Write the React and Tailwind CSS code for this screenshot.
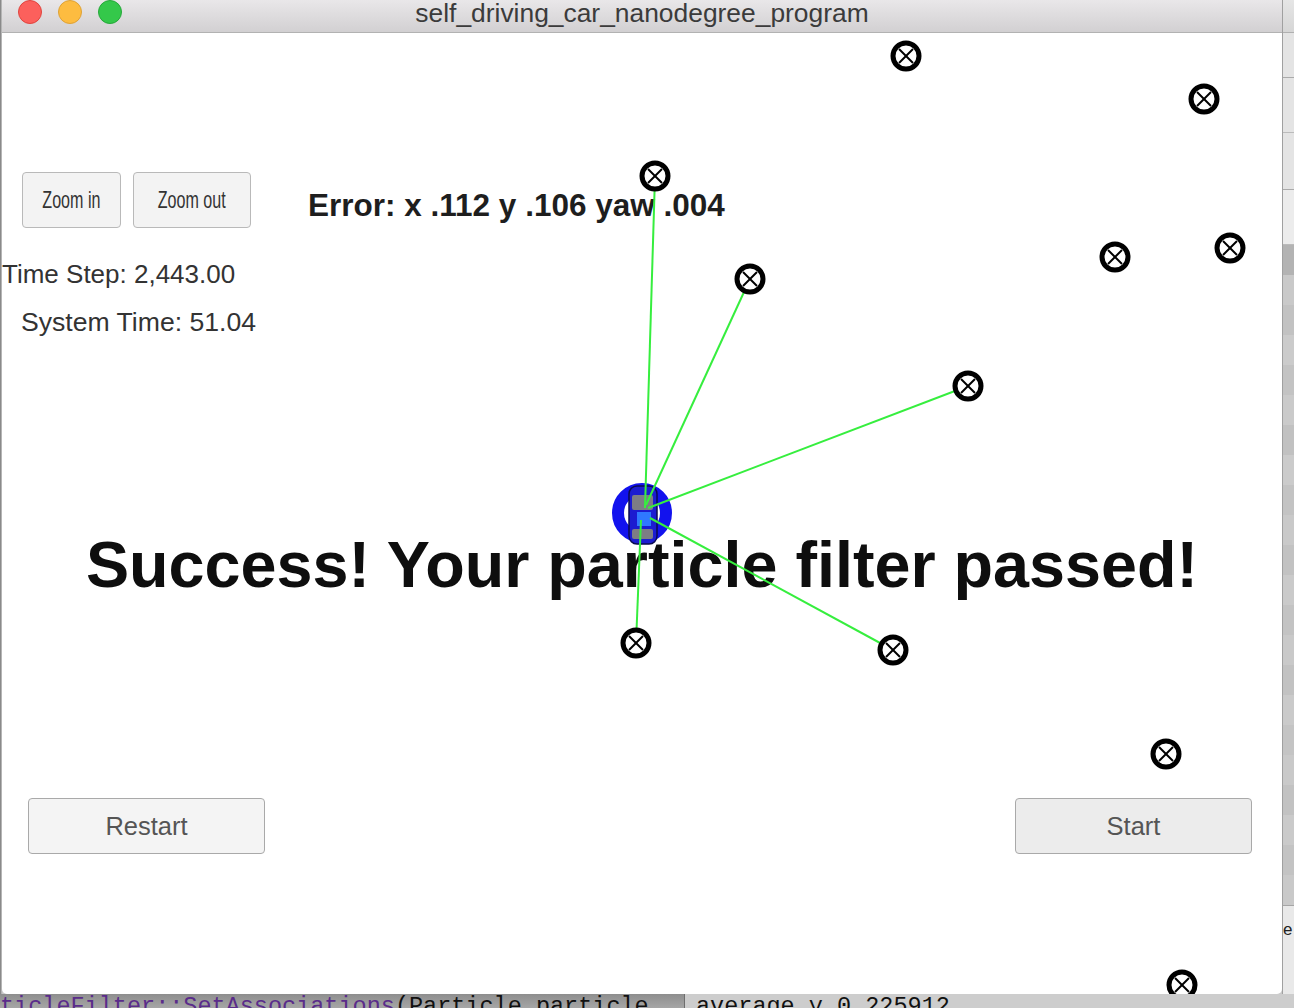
import React from 'react';

const markers = [
  [906, 56],
  [1204, 99],
  [655, 176],
  [750, 279],
  [1115, 257],
  [1230, 248],
  [968, 386],
  [636, 643],
  [893, 650],
  [1166, 754],
  [1182, 985],
];

const links = [
  [645, 508, 655, 176],
  [646, 505, 750, 279],
  [648, 508, 968, 386],
  [641, 520, 636, 643],
  [650, 518, 893, 650],
];

const sideStripes = [
  'bg-[#c9c9c9]', 'bg-[#c2c2c2]', 'bg-[#cbcbcb]', 'bg-[#c3c3c3]', 'bg-[#cacaca]',
  'bg-[#c1c1c1]', 'bg-[#cbcbcb]', 'bg-[#c3c3c3]', 'bg-[#c9c9c9]', 'bg-[#c2c2c2]',
  'bg-[#cacaca]', 'bg-[#c3c3c3]', 'bg-[#c9c9c9]', 'bg-[#c2c2c2]', 'bg-[#cacaca]',
  'bg-[#c4c4c4]', 'bg-[#c9c9c9]', 'bg-[#c2c2c2]', 'bg-[#cacaca]', 'bg-[#c3c3c3]',
  'bg-[#c9c9c9]',
];

function Landmark({ x, y }) {
  return (
    <g transform={`translate(${x} ${y})`}>
      <circle r="13" fill="white" stroke="black" strokeWidth="5" />
      <line x1="-7" y1="-7" x2="7" y2="7" stroke="black" strokeWidth="2" />
      <line x1="-7" y1="7" x2="7" y2="-7" stroke="black" strokeWidth="2" />
    </g>
  );
}

function Scene() {
  // drawn in page coordinates, viewBox offsets match the window content origin
  return (
    <svg
      className="absolute inset-0 pointer-events-none"
      width="1280"
      height="961"
      viewBox="2 33 1280 961"
    >
      <circle cx="642" cy="513" r="24" fill="none" stroke="#1212ee" strokeWidth="12" />
      <rect x="629" y="486" width="28" height="58" rx="8" fill="#1c1cd0" stroke="#0a0a50" strokeWidth="1.5" />
      <rect x="632" y="495" width="21" height="15" rx="2" fill="#7d7d85" />
      <rect x="632" y="529" width="21" height="10" rx="2" fill="#7d7d85" />
      <rect x="637" y="512" width="14" height="14" fill="#2f78ff" />
      {links.map(([x1, y1, x2, y2], i) => (
        <line key={i} x1={x1} y1={y1} x2={x2} y2={y2} stroke="#36ee3e" strokeWidth="2" />
      ))}
      {markers.map(([x, y], i) => (
        <Landmark key={i} x={x} y={y} />
      ))}
    </svg>
  );
}

function ZoomButton({ label, width }) {
  return (
    <button
      className={`${width} h-[56px] flex items-center justify-center bg-[#f3f3f3] border border-[#b9b9b9] rounded-[4px] text-[#333] text-[24px]`}
    >
      <span className="inline-block scale-x-[0.67]">{label}</span>
    </button>
  );
}

function SimButton({ label, tone }) {
  return (
    <button
      className={`w-[237px] h-[56px] flex items-center justify-center border border-[#a9a9a9] rounded-[4px] text-[#555] text-[25.5px] ${tone}`}
    >
      {label}
    </button>
  );
}

export default function App() {
  return (
    <div
      className="w-[1294px] h-[1008px] flex flex-col overflow-hidden bg-[#c8c8c8]"
      style={{ fontFamily: '"Liberation Sans", Arial, sans-serif' }}
    >
      <div className="flex h-[994px]">
        <div className="w-[2px] bg-[#b5b5b5] border-l border-[#8a8a8a]" />

        <div className="w-[1280px] flex flex-col bg-white rounded-b-[5px] overflow-hidden">
          <div className="h-[33px] shrink-0 grid grid-cols-[1fr_auto_1fr] bg-gradient-to-b from-[#e9e7e9] to-[#d2d0d2] border-b border-[#b2b2b2]">
            <div className="flex gap-[16px] pl-[16px]">
              <span className="w-6 h-6 rounded-full bg-[#fc605c] border border-[#e0443e]" />
              <span className="w-6 h-6 rounded-full bg-[#fdbc40] border border-[#dea236]" />
              <span className="w-6 h-6 rounded-full bg-[#34c84a] border border-[#26a83a]" />
            </div>
            <div className="whitespace-nowrap text-[26.4px] leading-[28px] text-[#3b3b3b] -mt-[1px]">
              self_driving_car_nanodegree_program
            </div>
            <div />
          </div>

          <div className="flex-1 relative">
            <div className="flex flex-col">
              <div className="flex items-center mt-[139px] pl-[20px]">
                <ZoomButton label="Zoom in" width="w-[99px]" />
                <div className="ml-[12px]">
                  <ZoomButton label="Zoom out" width="w-[118px]" />
                </div>
                <div className="ml-[57px] mt-[9px] text-[31.5px] leading-[34px] font-bold text-[#1e1e1e]">
                  Error: x .112 y .106 yaw .004
                </div>
              </div>

              <div className="mt-[31px] text-[26px] leading-[30px] text-[#333]">Time Step: 2,443.00</div>
              <div className="mt-[18px] pl-[19px] text-[26.6px] leading-[30px] text-[#333]">System Time: 51.04</div>

              <div className="mt-[193px] text-center text-[64.7px] leading-[70px] font-bold text-[#0e0e0e]">
                Success! Your particle filter passed!
              </div>

              <div className="mt-[198px] flex justify-between pl-[26px] pr-[30px]">
                <SimButton label="Restart" tone="bg-[#f4f4f4]" />
                <SimButton label="Start" tone="bg-[#ececec]" />
              </div>
            </div>

            <Scene />
          </div>
        </div>

        <div className="w-[12px] flex flex-col bg-[#e4e4e4] border-l border-[#a0a0a0]">
          <div className="h-[33px] bg-gradient-to-b from-[#e6e6e6] to-[#d6d6d6] border-b border-[#b0b0b0]" />
          <div className="h-[45px] border-b border-[#aaa]" />
          <div className="h-[55px] border-b border-[#bbb]" />
          <div className="h-[57px] border-b border-[#aaa]" />
          <div className="h-[55px] bg-[#ececec] border-b border-[#bbb]" />
          <div className="h-[30px] bg-[#b3b3b3]" />
          {sideStripes.map((c, i) => (
            <div key={i} className={`h-[30px] ${c}`} />
          ))}
          <div className="flex-1 bg-[#e9e9e9] border-t border-[#a5a5a5] text-[17px] leading-[20px] text-[#222] pt-[14px]">e</div>
        </div>
      </div>

      <div
        className="h-[14px] flex overflow-hidden text-[23.5px] leading-[24px]"
        style={{ fontFamily: '"Liberation Mono", "DejaVu Sans Mono", monospace' }}
      >
        <div className="w-[685px] bg-gradient-to-b from-[#8e8e8e] to-[#a6a6a6] border-r border-[#6e6e6e] whitespace-nowrap pt-[1px]">
          <span className="text-[#5a2c8a]">ticleFilter::SetAssociations</span>
          <span className="text-[#111]">(Particle particle</span>
        </div>
        <div className="flex-1 bg-[#cdcdcd] whitespace-nowrap pt-[1px] pl-[11px] text-[#111]">average y 0.225912</div>
      </div>
    </div>
  );
}
